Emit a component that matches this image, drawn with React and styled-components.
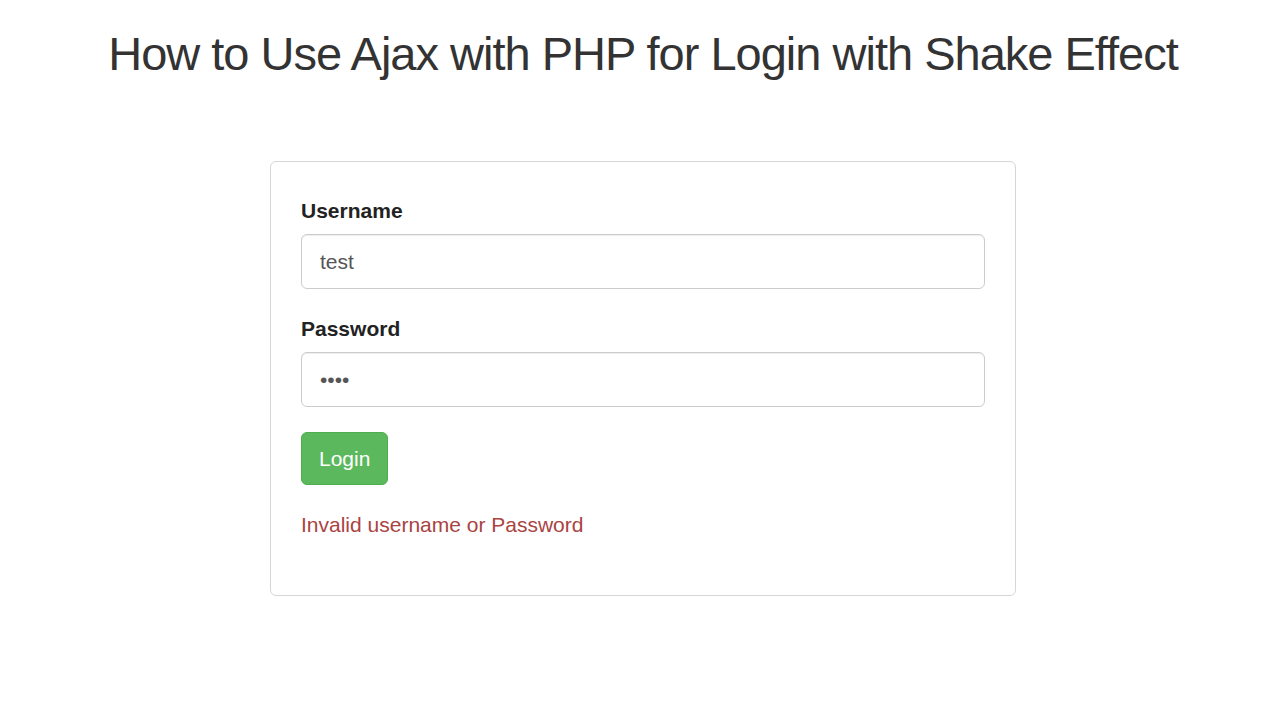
import styled, { createGlobalStyle } from "styled-components"

const Global = createGlobalStyle`
  html, body {
    margin: 0;
    background: #fff;
    font-family: "Liberation Sans", Arial, sans-serif;
    color: #333;
  }
`

export default function App() {
  return (
    <Page>
      <Global />
      <Title>How to Use Ajax with PHP for Login with Shake Effect</Title>
      <Panel>
        <Field>
          <Label>Username</Label>
          <Input type="text" defaultValue="test" />
        </Field>
        <Field $last>
          <Label>Password</Label>
          <Input type="password" defaultValue="test" />
        </Field>
        <Button>Login</Button>
        <Error>Invalid username or Password</Error>
      </Panel>
    </Page>
  )
}

const Page = styled.div`
  display: flex;
  flex-direction: column;
  align-items: center;
  padding: 26px 0 0 6px;
`

const Title = styled.h1`
  margin: 0;
  font-size: 47px;
  font-weight: 400;
  line-height: 56px;
  color: #333;
  letter-spacing: -1px;
`

const Panel = styled.div`
  box-sizing: border-box;
  width: 746px;
  margin-top: 79px;
  padding: 35px 30px 56px;
  border: 1px solid #d6d6d6;
  border-radius: 6px;
  display: flex;
  flex-direction: column;
  align-items: flex-start;
`

const Field = styled.div`
  width: 100%;
  display: flex;
  flex-direction: column;
  margin-bottom: ${(p) => (p.$last ? "25px" : "26px")};
`

const Label = styled.label`
  font-size: 21px;
  font-weight: 700;
  color: #222;
  line-height: 28px;
  margin-bottom: 9px;
`

const Input = styled.input`
  box-sizing: border-box;
  width: 100%;
  height: 55px;
  padding: 0 18px;
  border: 1px solid #ccc;
  border-radius: 6px;
  box-shadow: inset 0 1px 1px rgba(0, 0, 0, 0.075);
  font-family: "Liberation Sans", Arial, sans-serif;
  font-size: 21px;
  color: #555;
  outline: none;
`

const Button = styled.button`
  height: 53px;
  padding: 0 17px;
  background: #5cb85c;
  border: 1px solid #4cae4c;
  border-radius: 6px;
  color: #fff;
  font-family: "Liberation Sans", Arial, sans-serif;
  font-size: 21px;
  cursor: pointer;
`

const Error = styled.p`
  margin: 26px 0 0;
  font-size: 21px;
  line-height: 28px;
  color: #a94442;
`
